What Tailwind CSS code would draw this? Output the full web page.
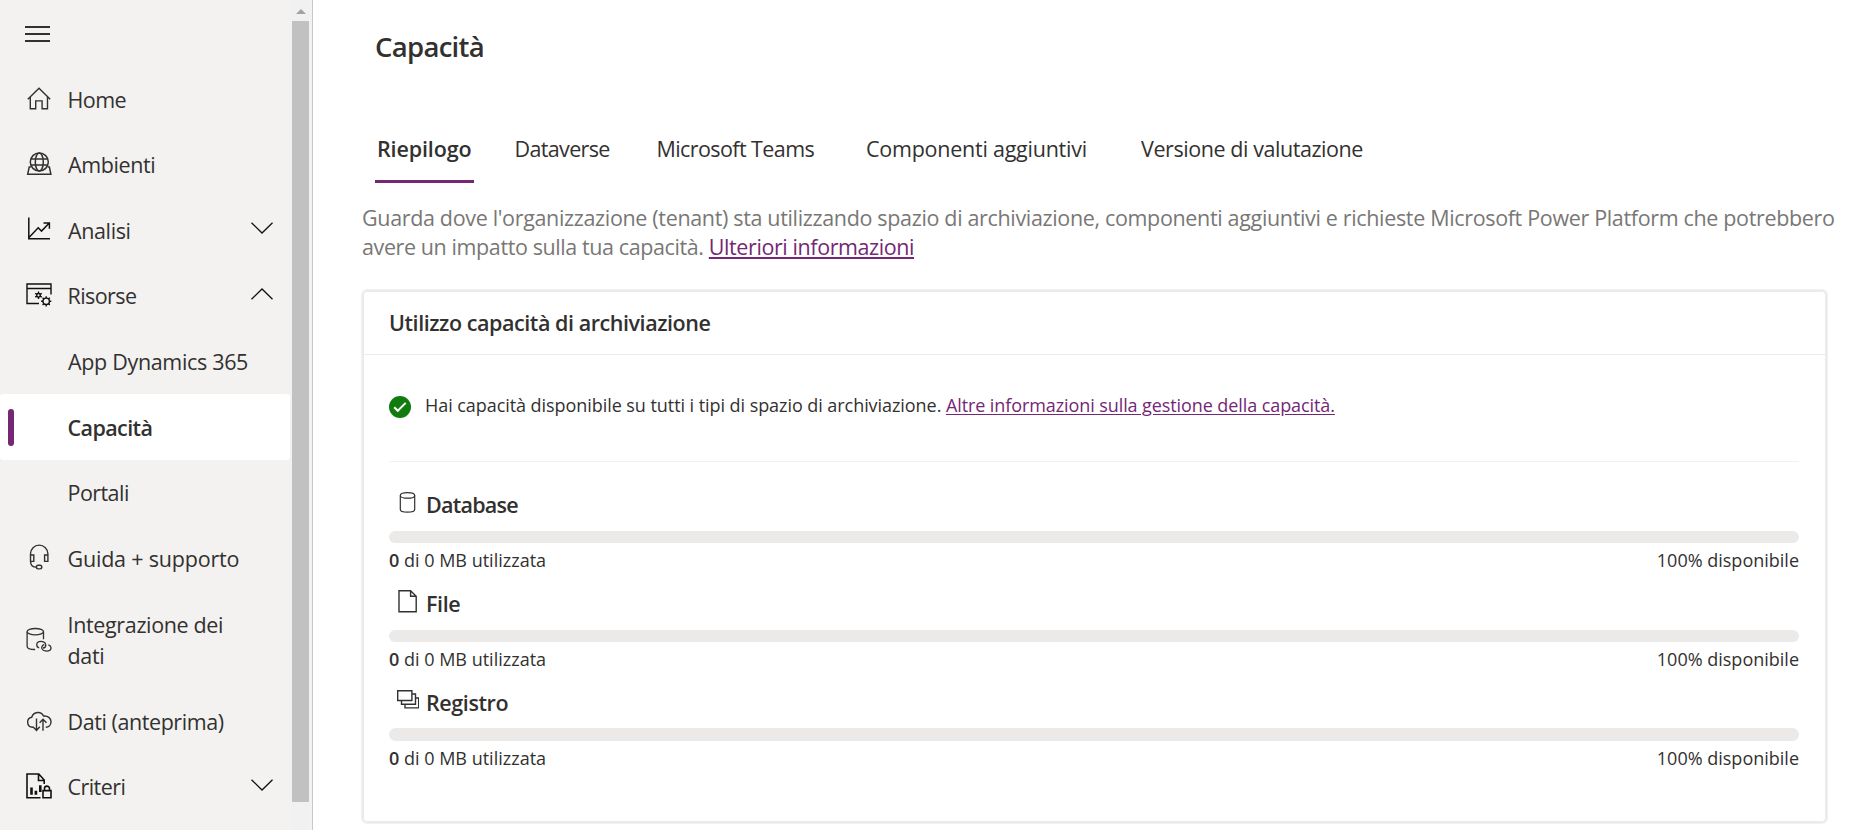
<!DOCTYPE html>
<html lang="it">
<head>
    <meta charset="UTF-8" />
    <meta name="viewport" content="width=device-width, initial-scale=1.0" />
    <title>Capacità</title>
    <script src="https://cdn.jsdelivr.net/npm/@tailwindcss/browser@4"></script>
</head>

<body class="bg-white h-[830px] flex overflow-hidden font-['Open_Sans','Noto_Sans',sans-serif] text-[#323130]">

    <!-- Menu laterale -->
    <aside class="flex w-[313px] h-full shrink-0 bg-[#f3f2f1] border-r border-[#c8c8c8]">
        <nav class="w-[290px] text-[21.5px] leading-[31px]">
            <div class="h-[66.3px] pl-[25px] pt-[26px]">
                <svg width="25" height="16" fill="#323130"><path d="M0 0h25v2H0zM0 7h25v2H0zM0 14h25v2H0z" /></svg>
            </div>

            <a class="flex items-center h-[65.6px] pl-[26px]">
                <svg width="26" height="26" viewBox="0 0 26 26" fill="none" stroke="#323130" stroke-width="1.4"><path d="M1.8 13.2 13 2.3l11.2 10.9M4.3 11v11.8h5.4v-7.9h6.4v7.9h5.4V11" /></svg>
                <span class="ml-[15.5px] tracking-[-0.55px]">Home</span>
            </a>
            <a class="flex items-center h-[65.6px] pl-[26px]">
                <svg class="-mt-px" width="26" height="26" viewBox="0 0 26 26" fill="none" stroke="#323130" stroke-width="1.5"><circle cx="13.3" cy="11" r="9" /><ellipse cx="13.3" cy="11" rx="4" ry="9" /><path d="M5 8h16.6M5 14h16.6M4.8 16H3.2L1.7 23.3h23.2L23.4 16h-1.6" /></svg>
                <span class="ml-[16px] tracking-[-0.38px]">Ambienti</span>
            </a>
            <a class="flex items-center h-[65.6px] pl-[26px]">
                <svg class="-mt-[2px]" width="26" height="26" viewBox="0 0 26 26" fill="none" stroke="#111" stroke-width="1.5"><path d="M2.8 1.5v21.2H24M3 21.5l9.2-9.7 3.3 3.3 7.8-8M17.5 7h5.9v5.800" /></svg>
                <span class="ml-[16px] tracking-[-0.38px]">Analisi</span>
                <svg class="ml-auto mr-[17px] -mt-1" width="22" height="12" viewBox="0 0 22 12" fill="none" stroke="#111" stroke-width="1.3"><path d="M.5.7 11 11 21.5.7" /></svg>
            </a>
            <a class="flex items-center h-[65.6px] pl-[26px]">
                <svg class="-mt-px" width="26" height="26" viewBox="0 0 26 26" fill="none" stroke="#111" stroke-width="1.4"><path d="M13 21.5H1V2h24v10.5M1 6.500h24" /><path d="M12.500 9.500v7.600M9.200 11.400l6.600 3.800M15.800 11.400l-6.600 3.800" /><circle cx="12.500" cy="13.300" r="1.800" fill="#f3f2f1" /><circle cx="20.200" cy="19.300" r="3.200" /><path d="M20.200 14.200v1.900M20.200 22.500v1.900M15.100 19.300H17M23.400 19.300h1.900M16.600 15.700l1.300 1.300M22.500 21.600l1.300 1.300M23.800 15.700 22.500 17M17.900 21.600l-1.300 1.300" /></svg>
                <span class="ml-[15.5px] tracking-[-0.57px]">Risorse</span>
                <svg class="ml-auto mr-[17px] -mt-1" width="22" height="12" viewBox="0 0 22 12" fill="none" stroke="#111" stroke-width="1.3"><path d="M.5 11.300 11 1l10.500 10.300" /></svg>
            </a>
            <a class="flex items-center h-[65.6px] pl-[68px] tracking-[-0.33px]">App Dynamics 365</a>
            <a class="flex items-center h-[65.6px] pl-2 bg-white rounded-[3px]">
                <span class="w-1.5 h-[37px] rounded-full bg-[#742774]"></span>
                <span class="ml-[53.5px] font-semibold tracking-[-0.6px]">Capacità</span>
            </a>
            <a class="flex items-center h-[65.6px] pl-[67.5px] tracking-[-0.55px]">Portali</a>
            <a class="flex items-center h-[65.6px] pl-[26px]">
                <svg class="-mt-[3px]" width="26" height="26" viewBox="0 0 26 26" fill="none" stroke="#323130" stroke-width="1.4"><path d="M4.500 10.500V9.800a8.700 8.700 0 0 1 17.400 0v.7M4.500 11h3.300v6.400H4.500zM18.600 11h3.300v6.400h-3.300zM4.600 17.400c0 3.600 1.900 5.600 5.800 5.700" /><rect x="10.400" y="21.200" width="5.400" height="3.700" rx="1.800" /></svg>
                <span class="ml-[15.5px] tracking-[-0.2px]">Guida + supporto</span>
            </a>
            <a class="flex items-center h-[98px] pl-[26px]">
                <svg class="-mt-px" width="26" height="26" viewBox="0 0 26 26" fill="none" stroke="#323130" stroke-width="1.3"><ellipse cx="9.300" cy="4.700" rx="8.200" ry="3.200" /><path d="M1.100 4.700V19.500c0 2 3.500 3 8 3M17.500 4.700v7.500" /><path d="M13.200 20.800c-3-.6-3.500-5.200-.2-6.200 2.900-.8 6.800.2 6.800 3.300 0 1.800-1 3-2.800 3.100M22.300 17.800c3 .5 3.500 4.300 1.400 5.600-2.300 1.300-7 .8-7.800-1.800-.5-2 .5-3.500 2.400-3.900" /></svg>
                <span class="ml-[15.500px] tracking-[-0.35px]">Integrazione dei<br />dati</span>
            </a>
            <a class="flex items-center h-[65.6px] pl-[26px]">
                <svg width="26" height="26" viewBox="0 0 26 26" fill="none" stroke="#323130" stroke-width="1.4"><path d="M8 18.200H6.500A5 5 0 0 1 5.700 8.300C7.600 2.500 15 1.800 17.600 7.100c4.200-.5 7.400 2.100 7.400 5.700 0 3.300-2.300 5.400-5.200 5.400M10.500 9.500v11.800M6.900 17.800l3.600 3.600 3.300-3.600M17 21.800V10.200M13.600 13.800 17 10.200l3.500 3.600" /></svg>
                <span class="ml-[15.5px] tracking-[-0.43px]">Dati (anteprima)</span>
            </a>
            <a class="flex items-center h-[65.6px] pl-[26px]">
                <svg class="-mt-[3px]" width="26" height="26" viewBox="0 0 26 26" fill="none" stroke="#111" stroke-width="1.600"><path d="M14.500 24.700H1V1h11.800l5.400 6v4M12.500 1v6.500h5.700" /><path d="M5.500 21.800v-7.300M9.900 21.800v-4M14.300 19v-6.800" stroke-width="2.600" /><path d="M17 17.600h8v7.100h-8zM18.500 17.600v-2a2.500 2.500 0 0 1 5 0v2" /></svg>
                <span class="ml-[15.5px] -mt-px tracking-[-0.55px]">Criteri</span>
                <svg class="ml-auto mr-[17px] -mt-[5px]" width="22" height="12" viewBox="0 0 22 12" fill="none" stroke="#111" stroke-width="1.3"><path d="M.5.7 11 11 21.5.7" /></svg>
            </a>
        </nav>

        <!-- Barra di scorrimento -->
        <div class="flex flex-col items-center ml-0.5 w-[17px] bg-[#f1f1f1]">
            <svg class="mt-[9px]" width="10" height="5" fill="#a3a3a3"><path d="M0 5 5 0l5 5z" /></svg>
            <div class="mt-[7px] w-full h-[781px] bg-[#c1c1c1]"></div>
        </div>
    </aside>

    <main class="flex-1 min-w-0 pl-[49px] pr-[45px]">
        <h1 class="pl-[13px] pt-[27px] text-[27.5px] leading-[40px] font-semibold tracking-[-0.7px]">Capacità</h1>

        <div class="grid grid-cols-[139px_142px_209px_275px_auto] ml-[13px] mt-[57px] h-[59px] text-[21.5px] leading-[50px] whitespace-nowrap">
            <div class="w-[99px] pl-[2px] h-full border-b-3 border-[#742774] font-semibold tracking-[-0.13px]">Riepilogo</div>
            <div class="pl-[0.5px] tracking-[-0.65px]">Dataverse</div>
            <div class="pl-[0.5px] tracking-[-0.59px]">Microsoft Teams</div>
            <div class="pl-[1px] tracking-[-0.24px]">Componenti aggiuntivi</div>
            <div class="pl-[1px] tracking-[-0.43px]">Versione di valutazione</div>
        </div>

        <p class="mt-[20px] text-[21.5px] leading-[29px] text-[#797775] tracking-[-0.34px] whitespace-nowrap">
            Guarda dove l'organizzazione (tenant) sta utilizzando spazio di archiviazione, componenti aggiuntivi e richieste Microsoft Power Platform che potrebbero<br />
            <span class="tracking-[-0.4px]">avere un impatto sulla tua capacità.</span>
            <a class="text-[#742774] tracking-[-0.41px] underline decoration-2 underline-offset-2">Ulteriori informazioni</a>
        </p>

        <section class="mt-[29px] h-[533px] border-2 border-[#ebebeb] rounded-[5px] shadow-[0_0_1px_1px_#f0f0f0]">
            <h2 class="h-[63px] pl-[25px] border-b border-[#ebebeb] text-[21.5px] leading-[62px] font-semibold tracking-[-0.44px]">Utilizzo capacità di archiviazione</h2>

            <div class="pl-[25px] pr-[26px] text-[18px]">
                <div class="flex items-center h-[107px] border-b border-[#f3f2f1]">
                    <svg class="mt-[-2px]" width="22" height="22" viewBox="0 0 22 22"><circle cx="11" cy="11" r="11" fill="#107c10" /><path d="m5.200 11.200 3.600 3.600 7.900-7.900" fill="none" stroke="#fff" stroke-width="2" /></svg>
                    <p class="ml-[14px] -mt-1.5 tracking-[-0.06px] whitespace-nowrap">Hai capacità disponibile su tutti i tipi di spazio di archiviazione. <a class="text-[#742774] tracking-[-0.09px] underline underline-offset-2">Altre informazioni sulla gestione della capacità.</a></p>
                </div>

                <div class="pt-[25px]">
                    <div class="h-[99px]">
                        <div class="flex h-[44px]">
                            <svg class="ml-[6px] mt-[3px]" width="24" height="24" viewBox="0 0 24 24" fill="none" stroke="#323130" stroke-width="1.2"><ellipse cx="12.500" cy="5.400" rx="7.200" ry="2.800" /><path d="M5.300 5.400v14c0 3.600 14.400 3.600 14.400 0v-14" /></svg>
                            <h3 class="ml-[7px] text-[21.5px] leading-[35px] font-semibold tracking-[-0.75px]">Database</h3>
                        </div>
                        <div class="h-[12px] rounded-full bg-[#ebeae8]"></div>
                        <div class="flex justify-between leading-[34px]">
                            <span><b class="font-semibold">0</b> di 0 MB utilizzata</span>
                            <span>100% disponibile</span>
                        </div>
                    </div>
                    <div class="h-[99px]">
                        <div class="flex h-[44px]">
                            <svg class="ml-[6px] mt-[3px]" width="24" height="24" viewBox="0 0 24 24" fill="none" stroke="#323130" stroke-width="1.4"><path d="M4 1.700h11.600l5.600 5.600v15.400H4zM15.600 1.700v5.600h5.600" /></svg>
                            <h3 class="ml-[7px] text-[21.5px] leading-[35px] font-semibold tracking-[-0.4px]">File</h3>
                        </div>
                        <div class="h-[12px] rounded-full bg-[#ebeae8]"></div>
                        <div class="flex justify-between leading-[34px]">
                            <span><b class="font-semibold">0</b> di 0 MB utilizzata</span>
                            <span>100% disponibile</span>
                        </div>
                    </div>
                    <div class="h-[99px]">
                        <div class="flex h-[43px]">
                            <svg class="ml-[6px] mt-[4px]" width="24" height="24" viewBox="0 0 24 24" fill="none" stroke="#323130" stroke-width="1.4"><path d="M2.700 1.700h14.200v9.800H2.700zM6.500 11.500v3.800h14V5h-3.600M10 15.300v3.600h13.700V9h-3.200" /></svg>
                            <h3 class="ml-[7px] text-[21.5px] leading-[35px] font-semibold tracking-[-0.4px]">Registro</h3>
                        </div>
                        <div class="h-[13px] rounded-full bg-[#ebeae8]"></div>
                        <div class="flex justify-between leading-[34px]">
                            <span><b class="font-semibold">0</b> di 0 MB utilizzata</span>
                            <span>100% disponibile</span>
                        </div>
                    </div>
                </div>
            </div>
        </section>
    </main>

</body>
</html>
